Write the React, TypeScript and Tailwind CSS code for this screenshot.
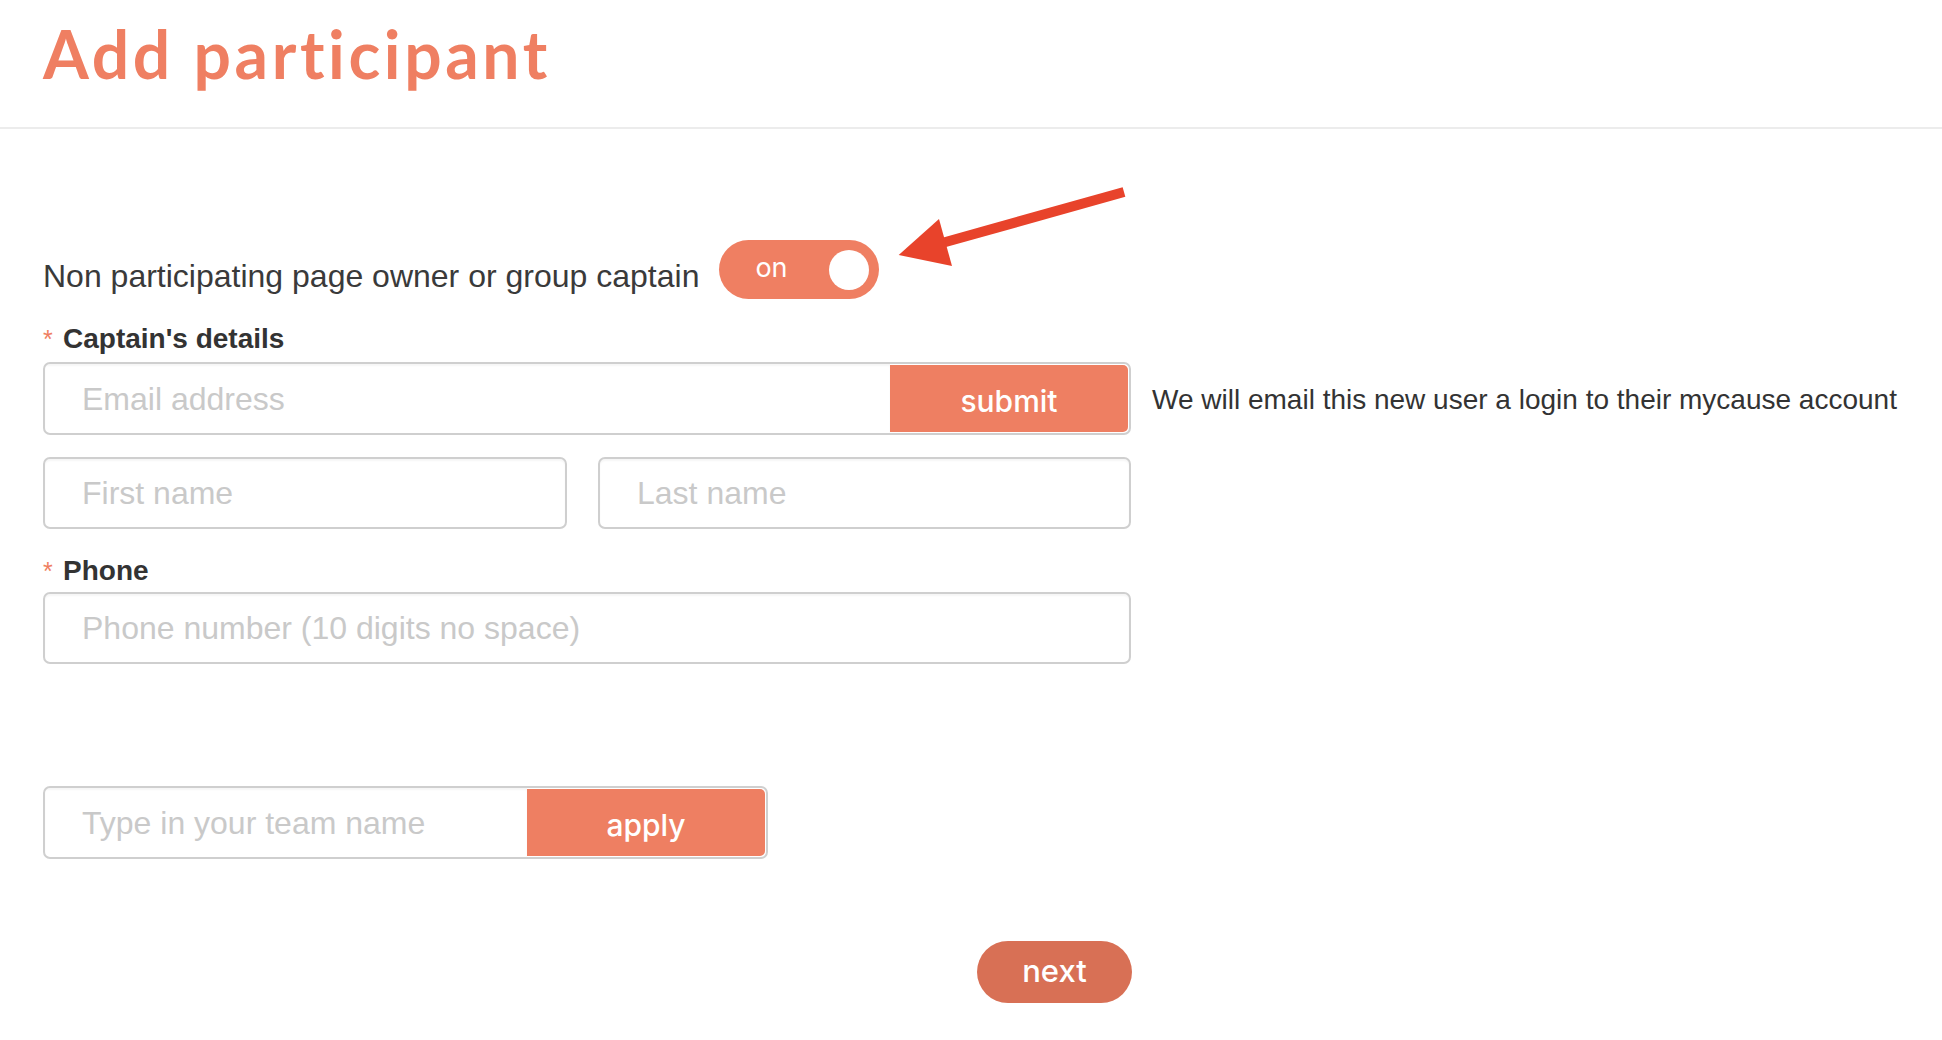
import React from "react";

const sans = { fontFamily: '"Liberation Sans", Arial, sans-serif' };

function Field({ placeholder, className = "" }: { placeholder: string; className?: string }) {
  return (
    <div
      className={`h-[72px] border-2 border-[#cfcfcf] rounded-[7px] bg-white flex items-center pl-[37px] shadow-[inset_0_2px_2px_rgba(0,0,0,0.04)] ${className}`}
    >
      <span className="text-[32px] text-[#c9c9c9] leading-none">{placeholder}</span>
    </div>
  );
}

function ButtonField({ placeholder, label, className = "" }: { placeholder: string; label: string; className?: string }) {
  return (
    <div
      className={`h-[73px] border-2 border-[#cfcfcf] rounded-[7px] bg-white flex overflow-hidden ${className}`}
    >
      <div className="flex-1 flex items-center pl-[37px] shadow-[inset_0_2px_2px_rgba(0,0,0,0.04)]">
        <span className="text-[32px] text-[#c9c9c9] leading-none">{placeholder}</span>
      </div>
      <div
        className="w-[238px] mt-[1px] mb-[1px] mr-[1px] rounded-r-[5px] bg-[#ee7f62] flex items-center justify-center text-white text-[30px] font-medium pt-[5px]"
        style={{ fontFamily: "Inter, sans-serif" }}
      >
        {label}
      </div>
    </div>
  );
}

function Req({ children }: { children: React.ReactNode }) {
  return (
    <div className="flex items-baseline h-[30px] leading-[30px]">
      <span className="text-[25px] text-[#ef7f62] w-[20px]">*</span>
      <span className="text-[28px] font-bold text-[#333333]">{children}</span>
    </div>
  );
}

export default function App() {
  return (
    <div className="relative w-[1942px] h-[1040px] bg-white overflow-hidden" style={sans}>
      <header className="h-[129px] border-b-2 border-[#ececec] pl-[43px] pt-[21px]">
        <h1
          className="text-[66px] leading-none font-bold text-[#ef7f62] tracking-[3.6px]"
          style={{ fontFamily: "Lato, sans-serif" }}
        >
          Add participant
        </h1>
      </header>

      <main className="pl-[43px] pt-[111px]">
        <div className="flex items-start">
          <span className="mt-[18px] text-[32px] leading-[36px] text-[#3a3a3a]">
            Non participating page owner or group captain
          </span>
          <div className="ml-[20px] w-[160px] h-[59px] rounded-full bg-[#ef7f62] flex items-center justify-between pl-[36px] pr-[10px]">
            <span className="text-white text-[27px] leading-none mb-[4px]" style={{ fontFamily: "Inter, sans-serif" }}>
              on
            </span>
            <span className="w-[40px] h-[40px] rounded-full bg-white" />
          </div>
        </div>

        <div className="mt-[25px]">
          <Req>Captain's details</Req>
        </div>

        <div className="mt-[8px] flex items-center">
          <ButtonField placeholder="Email address" label="submit" className="w-[1088px] h-[72px]" />
          <span className="ml-[21px] text-[28px] text-[#333333] whitespace-nowrap mt-[2px]">
            We will email this new user a login to their mycause account
          </span>
        </div>

        <div className="mt-[22px] flex w-[1088px] gap-[31px]">
          <Field placeholder="First name" className="w-[524px]" />
          <Field placeholder="Last name" className="flex-1" />
        </div>

        <div className="mt-[27px]">
          <Req>Phone</Req>
        </div>

        <div className="mt-[6px] w-[1088px]">
          <Field placeholder="Phone number (10 digits no space)" />
        </div>

        <div className="mt-[122px]">
          <ButtonField placeholder="Type in your team name" label="apply" className="w-[725px]" />
        </div>

        <div className="mt-[82px] w-[1089px] flex justify-end">
          <button
            className="w-[155px] h-[62px] rounded-full bg-[#d87055] text-white text-[31px] font-medium pb-[2px]"
            style={{ fontFamily: "Inter, sans-serif" }}
          >
            next
          </button>
        </div>
      </main>

      <svg
        className="absolute left-[890px] top-[180px]"
        width="245"
        height="100"
        viewBox="0 0 245 100"
      >
        <line x1="234" y1="12" x2="52" y2="63" stroke="#e8432b" strokeWidth="10" />
        <polygon points="8.7,75 49,39 62,86" fill="#e8432b" />
      </svg>
    </div>
  );
}
